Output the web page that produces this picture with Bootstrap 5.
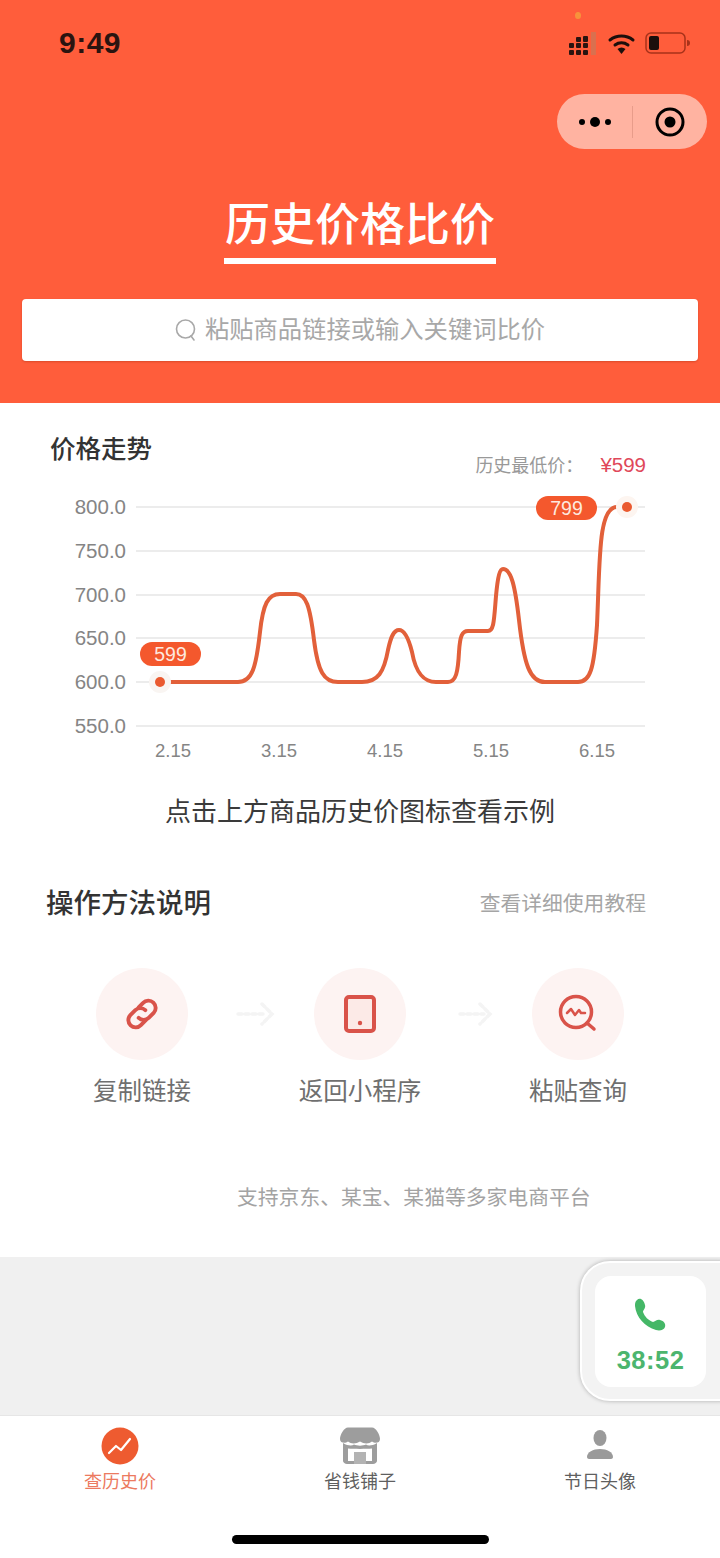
<!DOCTYPE html>
<html lang="zh-CN">
<head>
<meta charset="utf-8">
<title>历史价格比价</title>
<link href="https://cdn.jsdelivr.net/npm/bootstrap@5.3.0/dist/css/bootstrap.min.css" rel="stylesheet">
<style>
html,body{margin:0;background:#fff}
body{font-family:"Liberation Sans","Noto Sans CJK SC",sans-serif;color:#333}
.phone{width:720px;height:1558px;overflow:hidden}
.hero{height:403px;background:#ff5d3b}
.orange-dot{position:absolute;left:575px;top:12px;width:6px;height:7px;border-radius:50%;background:#f5a03c;opacity:.8}
.status-row{height:94px;padding:26px 29px 0 59px}
.status-icons{margin-top:4px}
.clock{font-size:30px;font-weight:700;color:#2a1410;line-height:34px;letter-spacing:.5px}
.capsule-row{padding-right:13px;height:55px}
.capsule{width:150px;height:55px;border-radius:28px;background:#ffb3a1}
.capsule-half{width:75px}
.capsule-line{width:1px;height:32px;background:#e89c8a}
.hero-title{font-size:45px;font-weight:500;color:#fff;line-height:56px;border-bottom:6px solid #fff;height:66px;margin:49px auto 35px;width:272px;text-align:center;white-space:nowrap}
.search-box{height:62px;margin:0 22px;background:#fff;border-radius:4px;color:#a8a8a8;font-size:24.3px;box-shadow:0 1px 2px rgba(150,40,10,.35)}
.trend-title{font-size:25.5px;font-weight:500;color:#333;line-height:32px;padding:30px 0 0 50px;height:62px}
.low-price{font-size:18px;color:#999;line-height:24px;margin:0 74px 0 0;height:15px;position:relative;top:-12px}
.low-price b{font-weight:400;color:#e0485a;margin-left:12px;font-size:20.5px}
.chart-svg{display:block;width:720px;height:295px}
.chart-svg text{font-family:"Liberation Sans","Noto Sans CJK SC",sans-serif}
.hint-text{font-size:26px;color:#3a3a3a;line-height:36px;margin-top:19px;height:91px}
.howto-title{font-size:27.5px;font-weight:500;color:#333;line-height:38px}
.howto-link{font-size:20.8px;color:#a5a5a5}
.howto-row{padding:0 74px 0 46px;height:38px}
.step-row{padding:45px 72px 0;height:215px}
.step-item{width:140px}
.step-circle{width:92px;height:92px;border-radius:50%;background:#fdf3f2}
.step-text{font-size:24.5px;color:#6f6f6f;line-height:32px;margin-top:16px;white-space:nowrap}
.step-arrow{width:78px;height:92px;display:block}
.platform-text{font-size:20.8px;color:#a3a3a3;line-height:30px;height:74px;padding-left:237px;margin-top:45px}
.gray-band{height:158px;background:#f0f0f0}
.call-float{position:absolute;z-index:2;left:580px;top:1261px;width:170px;height:140px;border-radius:30px;background:#f3f3f3;border:2px solid #fff;box-shadow:0 0 4px rgba(0,0,0,.28);padding:13px}
.call-inner{width:111px;height:111px;background:#fff;border-radius:16px;padding-top:21px}
.call-time{font-size:25.5px;font-weight:700;color:#4cb56e;line-height:28px;letter-spacing:.5px;margin-top:13px}
.tab-bar{height:143px;border-top:1px solid #e6e6e6;background:#fff;margin:0}
.tab-cell{height:72px;padding-top:10px}
.tab-icon{height:42px;display:block;margin:0 auto}
.tab-text{font-size:18px;line-height:24px;color:#5f5f5f;margin-top:2px}
.tab-on{color:#ec7a60}
.home-bar{position:absolute;left:232px;top:1535px;width:257px;height:9px;border-radius:5px;background:#000}
</style>
</head>
<body>
<div class="phone position-relative">
  <div class="hero">
    <div class="orange-dot"></div>
    <div class="status-row d-flex justify-content-between">
      <div class="clock">9:49</div>
      <svg class="status-icons" width="122" height="26" viewBox="0 0 122 26" aria-hidden="true">
        <g fill="#2a1410">
          <rect x="0" y="13" width="5" height="5" rx="1"/><rect x="7" y="13" width="5" height="5" rx="1"/><rect x="14" y="13" width="5" height="5" rx="1"/>
          <rect x="0" y="20" width="5" height="5" rx="1"/><rect x="7" y="20" width="5" height="5" rx="1"/><rect x="14" y="20" width="5" height="5" rx="1"/>
          <rect x="7" y="7" width="5" height="5" rx="1"/><rect x="14" y="6" width="5" height="6" rx="1"/>
        </g>
        <rect x="22" y="2" width="5" height="23" fill="#d9704f"/>
        <g fill="none" stroke="#1c0f0c" stroke-width="3" stroke-linecap="round">
          <path d="M41 10 a19 19 0 0 1 23 0"/><path d="M46 15 a11 11 0 0 1 13 0"/>
        </g>
        <path d="M48.500 19 a6 6 0 0 1 8 0 L52.500 24z" fill="#1c0f0c"/>
        <rect x="77" y="3" width="39" height="20" rx="5" fill="none" stroke="#a8321a" stroke-width="1.500"/>
        <rect x="80" y="6" width="10" height="14" rx="2" fill="#1c0f0c"/>
        <path d="M118 10 a3 3 0 0 1 0 6z" fill="#a8321a"/>
      </svg>
    </div>
    <div class="capsule-row d-flex justify-content-end">
      <div class="capsule d-flex align-items-center">
        <div class="capsule-half d-flex justify-content-center">
          <svg width="36" height="14" viewBox="0 0 36 14" aria-hidden="true"><circle cx="6" cy="7" r="3" fill="#000"/><circle cx="19" cy="7" r="5" fill="#000"/><circle cx="32" cy="7" r="3" fill="#000"/></svg>
        </div>
        <div class="capsule-line"></div>
        <div class="capsule-half d-flex justify-content-center">
          <svg width="30" height="30" viewBox="0 0 30 30" aria-hidden="true"><circle cx="15" cy="15" r="13" fill="none" stroke="#000" stroke-width="3"/><circle cx="15" cy="15" r="5.500" fill="#000"/></svg>
        </div>
      </div>
    </div>
    <div class="hero-title">历史价格比价</div>
    <div class="search-box d-flex align-items-center justify-content-center gap-2">
      <svg width="22" height="24" viewBox="0 0 22 24" aria-hidden="true"><circle cx="10.500" cy="11" r="9" fill="none" stroke="#a8a8a8" stroke-width="1.600"/><path d="M16 18l3 4" stroke="#a8a8a8" stroke-width="1.600" stroke-linecap="round"/></svg>
      <span>粘贴商品链接或输入关键词比价</span>
    </div>
  </div>

  <div class="trend-title">价格走势</div>
  <div class="low-price text-end">历史最低价： <b>¥599</b></div>
  <svg class="chart-svg" viewBox="0 480 720 295" role="img" aria-label="价格走势图">
    <g stroke="#e6e6e6" stroke-width="1.500">
      <path d="M136 507H645M136 551H645M136 595H645M136 638H645M136 682H645M136 726H645"/>
    </g>
    <g fill="#858585" font-size="20.500" text-anchor="end">
      <text x="126" y="514">800.0</text><text x="126" y="558">750.0</text><text x="126" y="602">700.0</text>
      <text x="126" y="645">650.0</text><text x="126" y="689">600.0</text><text x="126" y="733">550.0</text>
    </g>
    <g fill="#858585" font-size="18.500" text-anchor="middle">
      <text x="173" y="757">2.15</text><text x="279" y="757">3.15</text><text x="385" y="757">4.15</text><text x="491" y="757">5.15</text><text x="597" y="757">6.15</text>
    </g>
    <path d="M160 682H238C252 682 256 668 260 632C263 604 268 594 280 594H296C306 594 310 606 314 640C318 672 324 682 338 682H362C378 682 384 672 388 650C391 636 394 630 399 630C404 630 408 636 412 652C416 674 424 682 436 682H448C456 682 458 672 459 652C460 636 462 631 468 631H488C494 631 494 620 496 596C498 575 500 569 503 569C511 569 515 585 519 620C524 665 530 682 545 682H578C590 682 594 670 597 625C600 560 598 507 617 507" fill="none" stroke="#e2603a" stroke-width="4" stroke-linecap="round"/>
    <circle cx="160" cy="682" r="11" fill="#f9f5f2"/><circle cx="160" cy="682" r="5" fill="#ea5a30"/>
    <circle cx="627" cy="507" r="11" fill="#fdf5f0"/><circle cx="627" cy="507" r="5" fill="#ea5a30"/>
    <rect x="140" y="642" width="61" height="24" rx="12" fill="#f4582d"/><text x="170.500" y="661" fill="#fde8df" font-size="19.500" text-anchor="middle">599</text>
    <rect x="536" y="496" width="61" height="24" rx="12" fill="#f4582d"/><text x="566.500" y="515" fill="#fde8df" font-size="19.500" text-anchor="middle">799</text>
  </svg>
  <div class="hint-text text-center">点击上方商品历史价图标查看示例</div>

  <div class="howto-row d-flex justify-content-between align-items-center">
    <div class="howto-title">操作方法说明</div>
    <div class="howto-link">查看详细使用教程</div>
  </div>

  <div class="step-row d-flex align-items-start">
    <div class="step-item d-flex flex-column align-items-center">
      <div class="step-circle d-flex align-items-center justify-content-center">
        <svg width="40" height="40" viewBox="0 0 36 36" aria-hidden="true"><g fill="none" stroke="#d9534a" stroke-width="3.500" stroke-linecap="round"><path d="M15 12l4-4a6.500 6.500 0 0 1 9.500 9l-4.500 4.500a6.500 6.500 0 0 1-9 0"/><path d="M21 24l-4 4a6.500 6.500 0 0 1-9.500-9l4.500-4.500a6.500 6.500 0 0 1 9 0"/></g></svg>
      </div>
      <div class="step-text">复制链接</div>
    </div>
    <svg class="step-arrow" viewBox="0 0 78 92" aria-hidden="true"><path d="M26 46H52M50 36l10 10-10 10" fill="none" stroke="#f4f4f4" stroke-width="3.500" stroke-dasharray="4 3" stroke-linecap="round"/></svg>
    <div class="step-item d-flex flex-column align-items-center">
      <div class="step-circle d-flex align-items-center justify-content-center">
        <svg width="34" height="40" viewBox="0 0 34 40" aria-hidden="true"><rect x="3" y="3" width="28" height="34" rx="3" fill="#fbdcd8" fill-opacity=".4" stroke="#d9534a" stroke-width="4"/><circle cx="17" cy="29" r="2.200" fill="#d9534a"/></svg>
      </div>
      <div class="step-text">返回小程序</div>
    </div>
    <svg class="step-arrow" viewBox="0 0 78 92" aria-hidden="true"><path d="M30 46H54M50 36l10 10-10 10" fill="none" stroke="#f4f4f4" stroke-width="3.500" stroke-dasharray="4 3" stroke-linecap="round"/></svg>
    <div class="step-item d-flex flex-column align-items-center">
      <div class="step-circle d-flex align-items-center justify-content-center">
        <svg width="42" height="42" viewBox="0 0 42 42" aria-hidden="true"><circle cx="19" cy="19" r="15.500" fill="none" stroke="#d9534a" stroke-width="3.500"/><path d="M30 30l7 6" stroke="#d9534a" stroke-width="3.500" stroke-linecap="round"/><path d="M10 20l4-4 4 6 4-5 2 3h4" fill="none" stroke="#d9534a" stroke-width="2.500" stroke-linecap="round" stroke-linejoin="round"/></svg>
      </div>
      <div class="step-text">粘贴查询</div>
    </div>
  </div>

  <div class="platform-text">支持京东、某宝、某猫等多家电商平台</div>
  <div class="gray-band"></div>

  <div class="call-float">
    <div class="call-inner d-flex flex-column align-items-center">
      <svg width="36" height="36" viewBox="0 0 36 36" aria-hidden="true"><path d="M4 3C7 0 11 3 12 8C13 11 10 13 10 15C12 20 15 23 20 25C22 25 24 22 27 23C31 24 33 27 32 30C31 33 27 34 23 33C12 30 3 20 2 9C2 6 2 5 4 3Z" fill="#45b767"/></svg>
      <div class="call-time">38:52</div>
    </div>
  </div>

  <div class="tab-bar row g-0">
    <div class="col-4 tab-cell text-center">
      <svg class="tab-icon" width="38" height="42" viewBox="0 0 38 42" aria-hidden="true"><circle cx="19" cy="20" r="18.500" fill="#ee5b30"/><path d="M8 27l7-7 5 4 9-11" fill="none" stroke="#fff" stroke-width="2.200" stroke-linecap="round" stroke-linejoin="round"/></svg>
      <div class="tab-text tab-on">查历史价</div>
    </div>
    <div class="col-4 tab-cell text-center">
      <svg class="tab-icon" width="40" height="42" viewBox="0 0 40 42" aria-hidden="true"><path d="M8 1.500H32C36 1.500 40 9 40 13C40 17 35 18 32 15.500C29 18 24 18 20 15.500C16 18 11 18 8 15.500C5 18 0 17 0 13C0 9 4 1.500 8 1.500Z" fill="#9d9d9d"/><path d="M3 17C8 20 12 20 14 18.500C17 20 23 20 26 18.500C28 20 32 20 37 17V35C37 36.500 35 38 33 38H7C5 38 3 36.500 3 35Z" fill="#9d9d9d"/><path d="M8 22.500C14 23 26 23 32 22.500V35H8Z" fill="#fff"/><rect x="14" y="26" width="12" height="12" fill="#b3b3b3"/></svg>
      <div class="tab-text">省钱铺子</div>
    </div>
    <div class="col-4 tab-cell text-center">
      <svg class="tab-icon" width="38" height="42" viewBox="0 0 38 42" aria-hidden="true"><ellipse cx="19" cy="12" rx="6.500" ry="8" fill="#9a9a9a"/><path d="M6 31C6 26 12 23 19 23C26 23 32 26 32 31C32 32 31 33 30 33H8C7 33 6 32 6 31Z" fill="#9a9a9a"/></svg>
      <div class="tab-text">节日头像</div>
    </div>
  </div>
  <div class="home-bar"></div>
</div>
<script src="https://cdn.jsdelivr.net/npm/bootstrap@5.3.0/dist/js/bootstrap.bundle.min.js"></script>
</body>
</html>
